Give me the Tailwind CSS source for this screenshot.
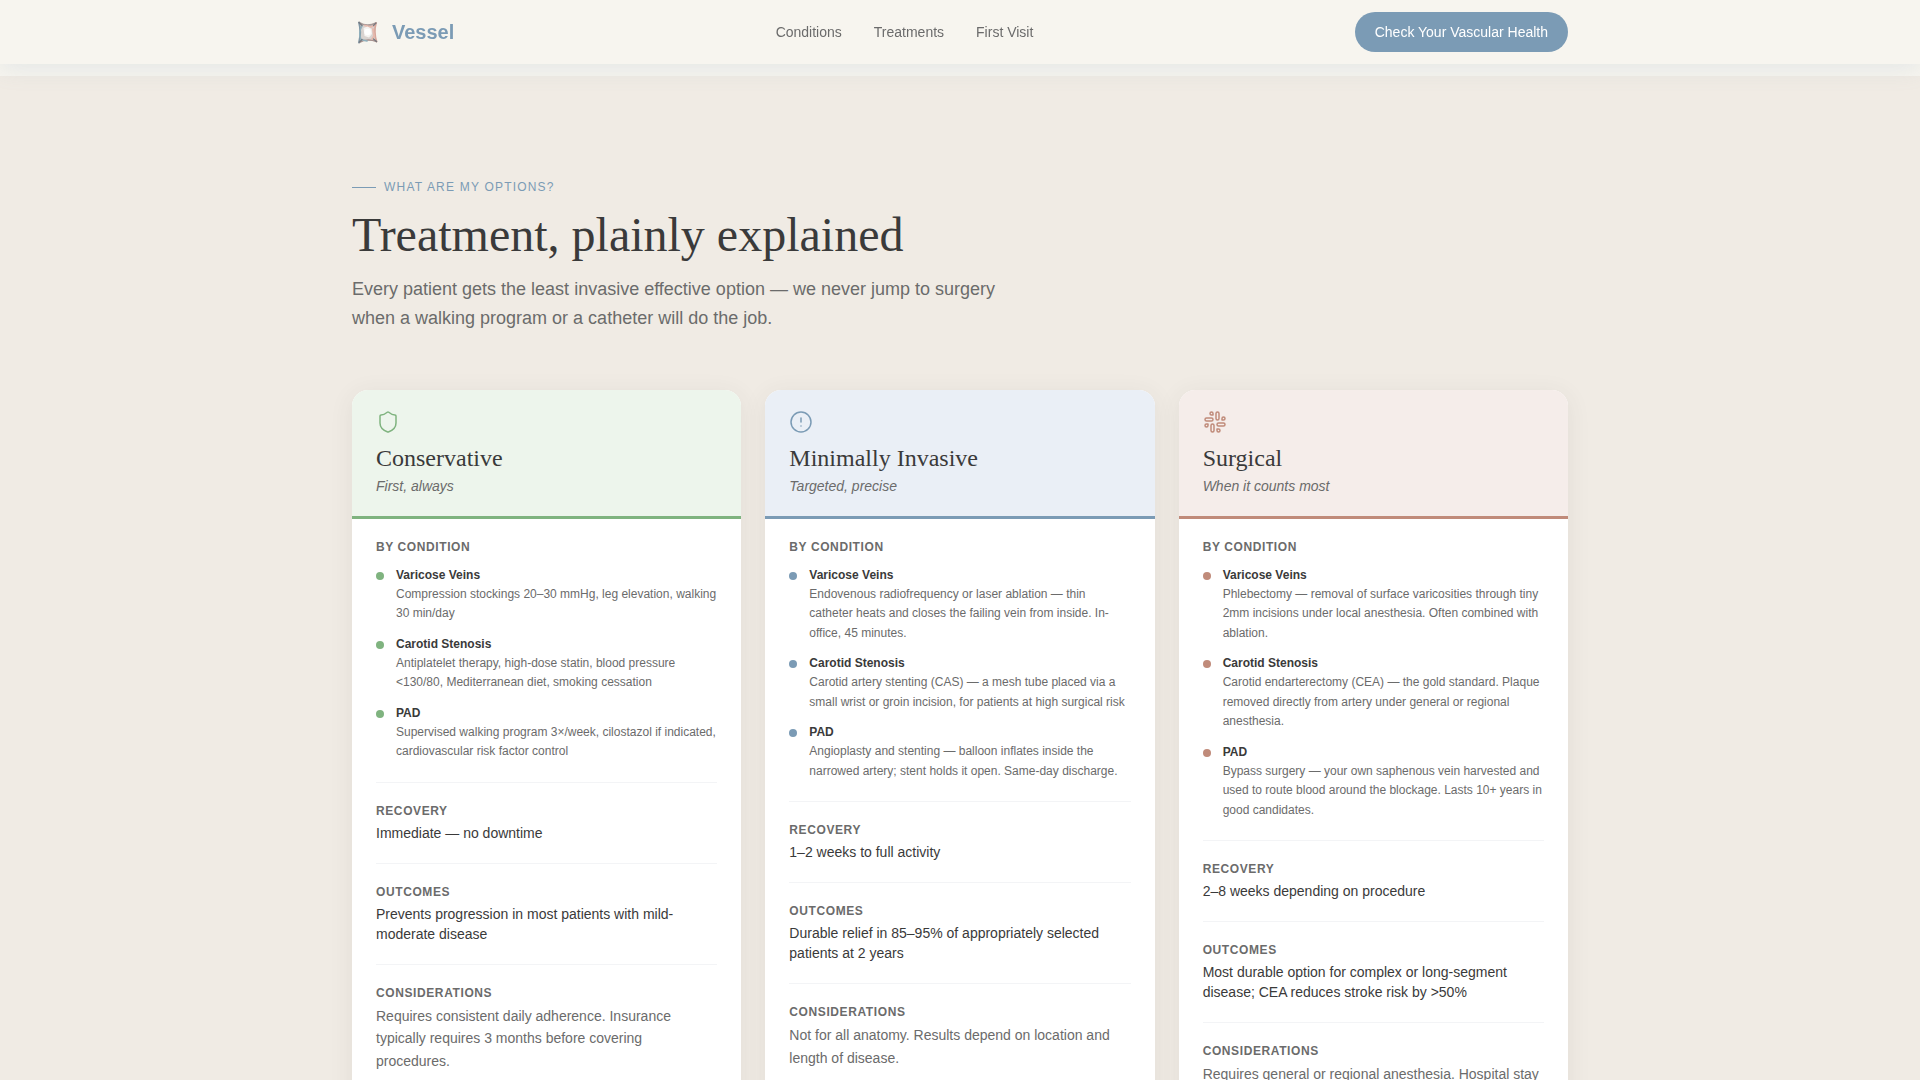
<!DOCTYPE html>
<html lang="en">
<head>
  <meta charset="UTF-8" />
  <meta name="viewport" content="width=device-width, initial-scale=1.0" />
  <title>Vessel | Treatments</title>
  <script src="https://cdn.jsdelivr.net/npm/@tailwindcss/browser@4"></script>
</head>
<body class="bg-[#f0ebe4] font-['Liberation_Sans',sans-serif] text-[#3a3a3a] overflow-x-hidden">

  <header class="fixed top-0 inset-x-0 z-10 bg-[#f7f5ef] shadow-[0_4px_24px_rgba(123,155,181,0.16)]">
    <div class="max-w-7xl mx-auto h-16 px-8 flex items-center justify-between">
      <a href="#" class="flex items-center gap-2">
        <svg class="size-8" viewBox="0 0 32 32" fill="none" stroke-linecap="round" stroke-linejoin="round" aria-hidden="true">
          <path d="M7 6.500Q15 11.500 24 7Q21.500 16 24.500 25.500Q15 22.500 7 26.500Q9.500 16 7 6.500Z" fill="#d9d3d0" />
          <path d="M7 6.500Q15 11.500 24 7" stroke="#a89a98" stroke-width="1.500" />
          <path d="M24 7Q21.500 16 24.500 25.500" stroke="#d8a79b" stroke-width="1.800" />
          <path d="M24.500 25.500Q15 22 7 26.500" stroke="#a8918e" stroke-width="1.500" />
          <path d="M7 6.500Q9.500 16 7 26.500" stroke="#8097a6" stroke-width="1.800" />
          <path d="M10 10Q6 17 9 23.500L15 25" stroke="#8fb0bd" stroke-width="1.500" />
          <path d="M13 9.500L19 11L22 9.500M21 13L22 20L20 23" stroke="#e6b9ad" stroke-width="1.800" />
          <path d="M7 6.500L10 9.500M24 7L21.500 9.500M7.500 26L10 23.500M24.500 25.500L21.500 23" stroke="#77797f" stroke-width="1.300" />
          <path d="M11.500 12L15.500 10.500L19.500 13L20 18L17 21.500L12.500 20Z" fill="#f6f4f2" />
          <circle cx="15.500" cy="16" r="3.200" fill="#fff" />
        </svg>
        <span class="text-xl font-bold text-[#7b9bb5]">Vessel</span>
      </a>
      <nav class="flex items-center gap-8 text-sm text-[#6b6b6b]">
        <a href="#conditions">Conditions</a>
        <a href="#treatments">Treatments</a>
        <a href="#first-visit">First Visit</a>
      </nav>
      <button type="button" class="h-10 px-5 rounded-full bg-[#7b9bb5] text-sm text-white">Check Your Vascular Health</button>
    </div>
  </header>

  <!-- end of the previous section -->
  <div class="h-19 bg-[#f7f5ef]"></div>

  <main id="treatments" class="max-w-7xl mx-auto px-8 pt-[103px] pb-24">
    <p class="flex items-center gap-2 text-xs tracking-[1.2px] uppercase text-[#7b9bb5]">
      <span class="w-6 h-px bg-[#7b9bb5]"></span>
      What are my options?
    </p>
    <h1 class="mt-3 font-['Liberation_Serif',serif] text-5xl leading-[56px]">Treatment, plainly explained</h1>
    <p class="mt-3 mb-14 max-w-2xl text-lg leading-relaxed text-[#6b6b6b]">Every patient gets the least invasive effective option — we never jump to surgery when a walking program or a catheter will do the job.</p>

    <div class="grid grid-cols-3 gap-6">

      <article class="rounded-2xl overflow-hidden bg-white shadow-[0_4px_24px_rgba(58,58,58,0.08)]">
        <div class="px-6 py-5 bg-[#edf5ec] border-b-3 border-[#7fb37f]">
          <svg class="size-6 mb-2" viewBox="0 0 24 24" fill="none" stroke="#7fb37f" stroke-width="1.5" stroke-linecap="round" stroke-linejoin="round" aria-hidden="true">
            <path d="M20 13c0 5-3.500 7.500-7.660 8.950a1 1 0 0 1-.67-.01C7.500 20.500 4 18 4 13V6a1 1 0 0 1 1-1c2 0 4.500-1.200 6.240-2.720a1.170 1.170 0 0 1 1.520 0C14.510 3.810 17 5 19 5a1 1 0 0 1 1 1z" />
          </svg>
          <h2 class="font-['Liberation_Serif',serif] text-2xl">Conservative</h2>
          <p class="mt-0.5 text-sm italic text-[#6b6b6b]">First, always</p>
        </div>
        <div class="px-6 py-5 flex flex-col gap-5">
          <section>
            <h3 class="mb-3 text-xs font-bold tracking-[0.6px] uppercase text-[#6b6b6b]">By condition</h3>
            <ul class="flex flex-col gap-3 text-xs">
              <li class="flex gap-3">
                <span class="size-2 mt-[5px] shrink-0 rounded-full bg-[#7fb37f]"></span>
                <div>
                  <h4 class="font-bold">Varicose Veins</h4>
                  <p class="mt-0.5 leading-relaxed text-[#6b6b6b]">Compression stockings 20–30 mmHg, leg elevation, walking 30 min/day</p>
                </div>
              </li>
              <li class="flex gap-3">
                <span class="size-2 mt-[5px] shrink-0 rounded-full bg-[#7fb37f]"></span>
                <div>
                  <h4 class="font-bold">Carotid Stenosis</h4>
                  <p class="mt-0.5 leading-relaxed text-[#6b6b6b]">Antiplatelet therapy, high-dose statin, blood pressure &lt;130/80, Mediterranean diet, smoking cessation</p>
                </div>
              </li>
              <li class="flex gap-3">
                <span class="size-2 mt-[5px] shrink-0 rounded-full bg-[#7fb37f]"></span>
                <div>
                  <h4 class="font-bold">PAD</h4>
                  <p class="mt-0.5 leading-relaxed text-[#6b6b6b]">Supervised walking program 3×/week, cilostazol if indicated, cardiovascular risk factor control</p>
                </div>
              </li>
            </ul>
          </section>
          <section class="pt-5 border-t border-gray-100">
            <h3 class="mb-1 text-xs font-bold tracking-[0.6px] uppercase text-[#6b6b6b]">Recovery</h3>
            <p class="text-sm">Immediate — no downtime</p>
          </section>
          <section class="pt-5 border-t border-gray-100">
            <h3 class="mb-1 text-xs font-bold tracking-[0.6px] uppercase text-[#6b6b6b]">Outcomes</h3>
            <p class="text-sm">Prevents progression in most patients with mild-moderate disease</p>
          </section>
          <section class="pt-5 border-t border-gray-100">
            <h3 class="mb-1 text-xs font-bold tracking-[0.6px] uppercase text-[#6b6b6b]">Considerations</h3>
            <p class="text-sm leading-relaxed text-[#6b6b6b]">Requires consistent daily adherence. Insurance typically requires 3 months before covering procedures.</p>
          </section>
        </div>
      </article>

      <article class="rounded-2xl overflow-hidden bg-white shadow-[0_4px_24px_rgba(58,58,58,0.08)]">
        <div class="px-6 py-5 bg-[#eaeff6] border-b-3 border-[#7b9bb5]">
          <svg class="size-6 mb-2" viewBox="0 0 24 24" fill="none" stroke="#7b9bb5" stroke-width="1.5" stroke-linecap="round" stroke-linejoin="round" aria-hidden="true">
            <circle cx="12" cy="12" r="10" />
            <path d="M12 8v4M12 16h.01" />
          </svg>
          <h2 class="font-['Liberation_Serif',serif] text-2xl">Minimally Invasive</h2>
          <p class="mt-0.5 text-sm italic text-[#6b6b6b]">Targeted, precise</p>
        </div>
        <div class="px-6 py-5 flex flex-col gap-5">
          <section>
            <h3 class="mb-3 text-xs font-bold tracking-[0.6px] uppercase text-[#6b6b6b]">By condition</h3>
            <ul class="flex flex-col gap-3 text-xs">
              <li class="flex gap-3">
                <span class="size-2 mt-[5px] shrink-0 rounded-full bg-[#7b9bb5]"></span>
                <div>
                  <h4 class="font-bold">Varicose Veins</h4>
                  <p class="mt-0.5 leading-relaxed text-[#6b6b6b]">Endovenous radiofrequency or laser ablation — thin catheter heats and closes the failing vein from inside. In-office, 45 minutes.</p>
                </div>
              </li>
              <li class="flex gap-3">
                <span class="size-2 mt-[5px] shrink-0 rounded-full bg-[#7b9bb5]"></span>
                <div>
                  <h4 class="font-bold">Carotid Stenosis</h4>
                  <p class="mt-0.5 leading-relaxed text-[#6b6b6b]">Carotid artery stenting (CAS) — a mesh tube placed via a small wrist or groin incision, for patients at high surgical risk</p>
                </div>
              </li>
              <li class="flex gap-3">
                <span class="size-2 mt-[5px] shrink-0 rounded-full bg-[#7b9bb5]"></span>
                <div>
                  <h4 class="font-bold">PAD</h4>
                  <p class="mt-0.5 leading-relaxed text-[#6b6b6b]">Angioplasty and stenting — balloon inflates inside the narrowed artery; stent holds it open. Same-day discharge.</p>
                </div>
              </li>
            </ul>
          </section>
          <section class="pt-5 border-t border-gray-100">
            <h3 class="mb-1 text-xs font-bold tracking-[0.6px] uppercase text-[#6b6b6b]">Recovery</h3>
            <p class="text-sm">1–2 weeks to full activity</p>
          </section>
          <section class="pt-5 border-t border-gray-100">
            <h3 class="mb-1 text-xs font-bold tracking-[0.6px] uppercase text-[#6b6b6b]">Outcomes</h3>
            <p class="text-sm">Durable relief in 85–95% of appropriately selected patients at 2 years</p>
          </section>
          <section class="pt-5 border-t border-gray-100">
            <h3 class="mb-1 text-xs font-bold tracking-[0.6px] uppercase text-[#6b6b6b]">Considerations</h3>
            <p class="text-sm leading-relaxed text-[#6b6b6b]">Not for all anatomy. Results depend on location and length of disease.</p>
          </section>
        </div>
      </article>

      <article class="rounded-2xl overflow-hidden bg-white shadow-[0_4px_24px_rgba(58,58,58,0.08)]">
        <div class="px-6 py-5 bg-[#f5edea] border-b-3 border-[#c08b7a]">
          <svg class="size-6 mb-2" viewBox="0 0 24 24" fill="none" stroke="#c08b7a" stroke-width="1.5" stroke-linecap="round" stroke-linejoin="round" aria-hidden="true">
            <rect width="3" height="8" x="13" y="2" rx="1.5" />
            <path d="M19 8.500V10h1.500A1.500 1.500 0 1 0 19 8.500" />
            <rect width="3" height="8" x="8" y="14" rx="1.5" />
            <path d="M5 15.500V14H3.500A1.500 1.500 0 1 0 5 15.500" />
            <rect width="8" height="3" x="14" y="13" rx="1.5" />
            <path d="M15.500 19H14v1.500a1.500 1.500 0 1 0 1.500-1.500" />
            <rect width="8" height="3" x="2" y="8" rx="1.5" />
            <path d="M8.500 5H10V3.500A1.500 1.500 0 1 0 8.500 5" />
          </svg>
          <h2 class="font-['Liberation_Serif',serif] text-2xl">Surgical</h2>
          <p class="mt-0.5 text-sm italic text-[#6b6b6b]">When it counts most</p>
        </div>
        <div class="px-6 py-5 flex flex-col gap-5">
          <section>
            <h3 class="mb-3 text-xs font-bold tracking-[0.6px] uppercase text-[#6b6b6b]">By condition</h3>
            <ul class="flex flex-col gap-3 text-xs">
              <li class="flex gap-3">
                <span class="size-2 mt-[5px] shrink-0 rounded-full bg-[#c08b7a]"></span>
                <div>
                  <h4 class="font-bold">Varicose Veins</h4>
                  <p class="mt-0.5 leading-relaxed text-[#6b6b6b]">Phlebectomy — removal of surface varicosities through tiny 2mm incisions under local anesthesia. Often combined with ablation.</p>
                </div>
              </li>
              <li class="flex gap-3">
                <span class="size-2 mt-[5px] shrink-0 rounded-full bg-[#c08b7a]"></span>
                <div>
                  <h4 class="font-bold">Carotid Stenosis</h4>
                  <p class="mt-0.5 leading-relaxed text-[#6b6b6b]">Carotid endarterectomy (CEA) — the gold standard. Plaque removed directly from artery under general or regional anesthesia.</p>
                </div>
              </li>
              <li class="flex gap-3">
                <span class="size-2 mt-[5px] shrink-0 rounded-full bg-[#c08b7a]"></span>
                <div>
                  <h4 class="font-bold">PAD</h4>
                  <p class="mt-0.5 leading-relaxed text-[#6b6b6b]">Bypass surgery — your own saphenous vein harvested and used to route blood around the blockage. Lasts 10+ years in good candidates.</p>
                </div>
              </li>
            </ul>
          </section>
          <section class="pt-5 border-t border-gray-100">
            <h3 class="mb-1 text-xs font-bold tracking-[0.6px] uppercase text-[#6b6b6b]">Recovery</h3>
            <p class="text-sm">2–8 weeks depending on procedure</p>
          </section>
          <section class="pt-5 border-t border-gray-100">
            <h3 class="mb-1 text-xs font-bold tracking-[0.6px] uppercase text-[#6b6b6b]">Outcomes</h3>
            <p class="text-sm">Most durable option for complex or long-segment disease; CEA reduces stroke risk by &gt;50%</p>
          </section>
          <section class="pt-5 border-t border-gray-100">
            <h3 class="mb-1 text-xs font-bold tracking-[0.6px] uppercase text-[#6b6b6b]">Considerations</h3>
            <p class="text-sm leading-relaxed text-[#6b6b6b]">Requires general or regional anesthesia. Hospital stay may be needed.</p>
          </section>
        </div>
      </article>

    </div>
  </main>
</body>
</html>
